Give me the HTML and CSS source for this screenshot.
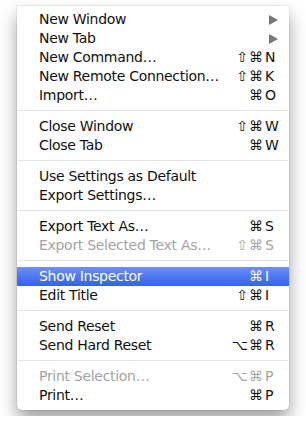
FILE: index.html
```html
<!DOCTYPE HTML>
<html>
<head>
  <title>Shell menu</title>
  <meta charset="utf-8" />
  <link rel="stylesheet" href="styles.css">
</head>
<body>
<div class="menu">
  <div class="item"><span class="label">New Window</span><span class="mods"></span><span class="key"><span class="arrow"></span></span></div>
  <div class="item"><span class="label">New Tab</span><span class="mods"></span><span class="key"><span class="arrow"></span></span></div>
  <div class="item"><span class="label">New Command…</span><span class="mods">⇧⌘</span><span class="key">N</span></div>
  <div class="item"><span class="label">New Remote Connection…</span><span class="mods">⇧⌘</span><span class="key">K</span></div>
  <div class="item"><span class="label">Import…</span><span class="mods">⌘</span><span class="key">O</span></div>
  <div class="sep"></div>
  <div class="item"><span class="label">Close Window</span><span class="mods">⇧⌘</span><span class="key">W</span></div>
  <div class="item"><span class="label">Close Tab</span><span class="mods">⌘</span><span class="key">W</span></div>
  <div class="sep"></div>
  <div class="item"><span class="label">Use Settings as Default</span><span class="mods"></span><span class="key"></span></div>
  <div class="item"><span class="label">Export Settings…</span><span class="mods"></span><span class="key"></span></div>
  <div class="sep"></div>
  <div class="item"><span class="label">Export Text As…</span><span class="mods">⌘</span><span class="key">S</span></div>
  <div class="item disabled"><span class="label">Export Selected Text As…</span><span class="mods">⇧⌘</span><span class="key">S</span></div>
  <div class="sep"></div>
  <div class="item selected"><span class="label">Show Inspector</span><span class="mods">⌘</span><span class="key">I</span></div>
  <div class="item"><span class="label">Edit Title</span><span class="mods">⇧⌘</span><span class="key">I</span></div>
  <div class="sep"></div>
  <div class="item"><span class="label">Send Reset</span><span class="mods">⌘</span><span class="key">R</span></div>
  <div class="item"><span class="label">Send Hard Reset</span><span class="mods">⌥⌘</span><span class="key">R</span></div>
  <div class="sep"></div>
  <div class="item disabled"><span class="label">Print Selection…</span><span class="mods">⌥⌘</span><span class="key">P</span></div>
  <div class="item"><span class="label">Print…</span><span class="mods">⌘</span><span class="key">P</span></div>
</div>
</body>
</html>
```

FILE: styles.css
```css
* {
  margin: 0;
  padding: 0;
}

body {
  background: #fff;
  padding: 6px 17px;
  font-family: "DejaVu Sans", "Liberation Sans", sans-serif;
  font-size: 14px;
  color: #111;
}

.menu {
  width: 272px;
  padding: 4px 0 5px;
  background: #fff;
  border-radius: 0 0 5px 5px;
  box-shadow: 0 0 0 1px rgba(0, 0, 0, 0.06), 0 10px 18px rgba(0, 0, 0, 0.38);
}

.item {
  display: flex;
  align-items: center;
  height: 19px;
  line-height: 19px;
  padding: 0 10px 0 22px;
}

.label {
  flex: 1;
  letter-spacing: -0.3px;
}

.mods {
  text-align: right;
  letter-spacing: 1px;
}

.key {
  width: 14px;
  padding-left: 1px;
}

.arrow {
  display: block;
  width: 0;
  height: 0;
  margin-left: 4px;
  border-left: 9px solid #777;
  border-top: 5px solid transparent;
  border-bottom: 5px solid transparent;
}

.disabled {
  color: #a3a3a3;
}

.selected {
  color: #fff;
  background: linear-gradient(#6e8ff6, #3461ee);
}

.sep {
  height: 12px;
  position: relative;
}

.sep::after {
  content: "";
  display: block;
  position: absolute;
  left: 1px;
  right: 1px;
  top: 5px;
  height: 1px;
  background: #e2e2e2;
}
```
